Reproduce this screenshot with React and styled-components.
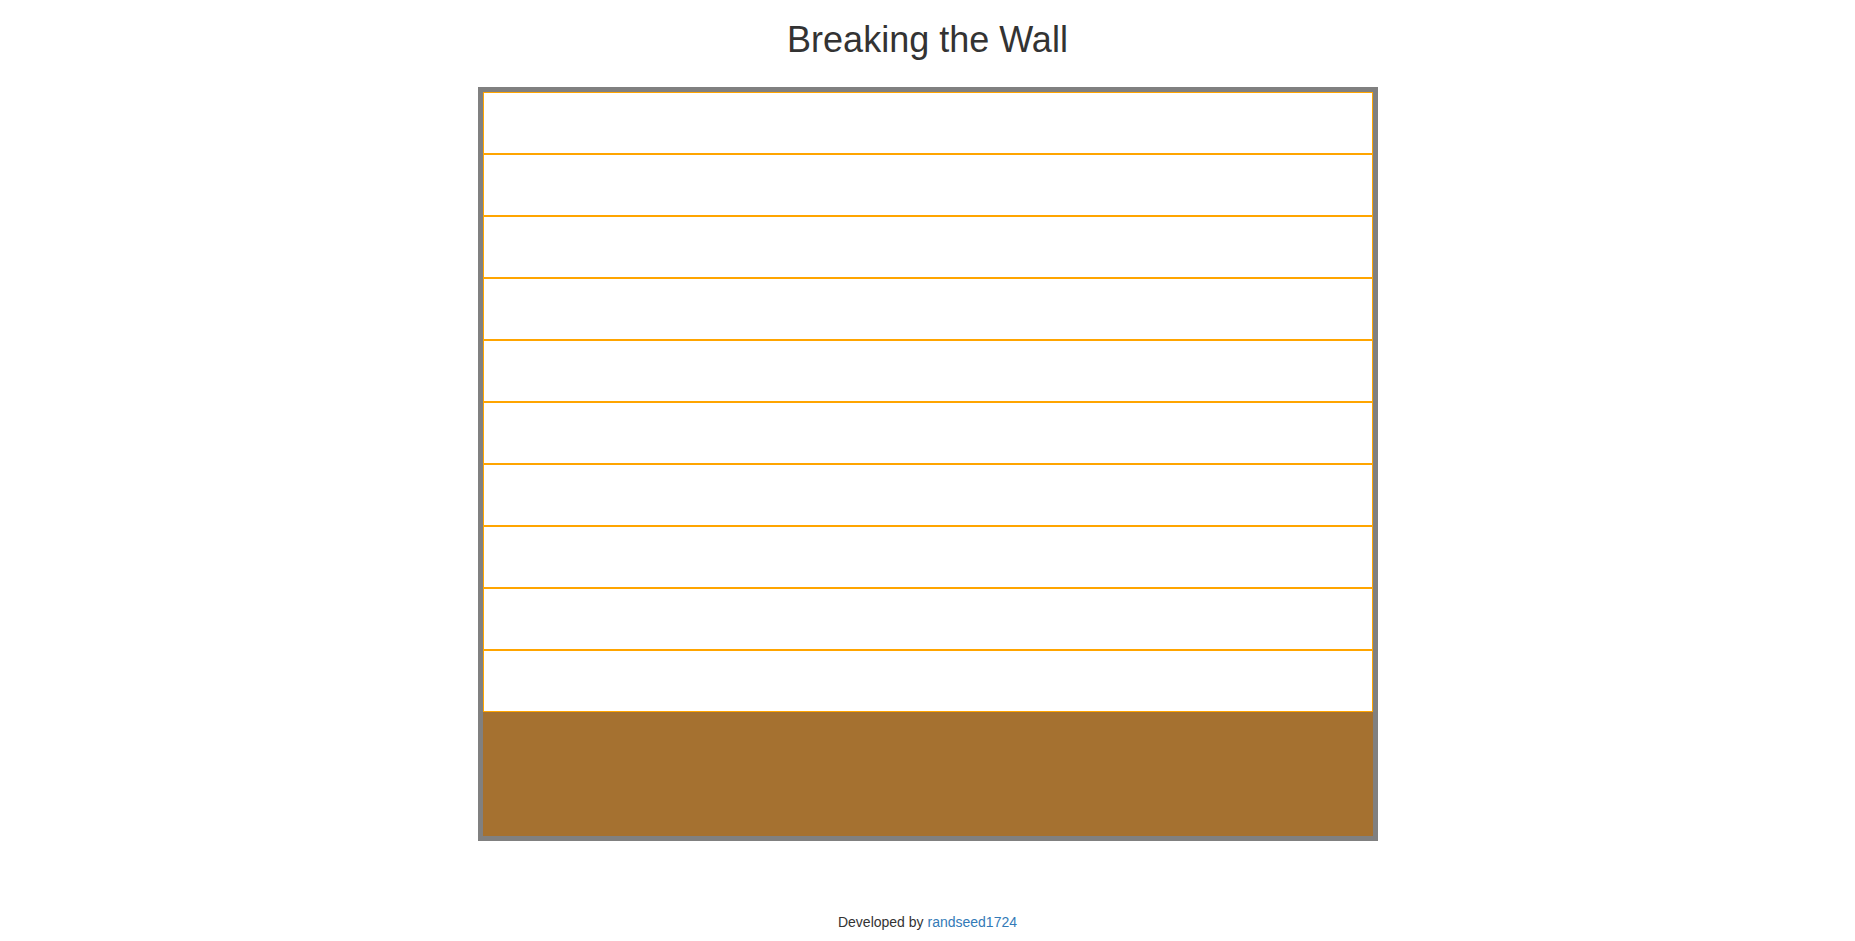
import React from 'react';
import styled, { createGlobalStyle } from 'styled-components';

const GlobalStyle = createGlobalStyle`
	body {
		margin: 0;
		background: #fff;
		font-family: "Liberation Sans", Arial, sans-serif;
		color: #333;
	}
`;

const Page = styled.div`
	display: flex;
	flex-direction: column;
	align-items: center;
	width: 100%;
`;
const Title = styled.h1`
	margin: 20px 0 0;
	font-size: 36px;
	font-weight: 500;
	line-height: 40px;
	color: #333;
`;
const Board = styled.div`
	box-sizing: border-box;
	margin-top: 27px;
	width: 900px;
	height: 754px;
	border: 5px solid #808080;
	display: flex;
	flex-direction: column;
`;
const Brick = styled.div`
	box-sizing: border-box;
	height: 62px;
	border: 1px solid #ffa500;
	background: ${(p) => (p.$broken ? 'transparent' : '#fff')};
`;
const Paddle = styled.div`
	flex: 1;
	background: #a57130;
`;
const Footer = styled.footer`
	margin-top: 71px;
	font-size: 14px;
	line-height: 20px;
	color: #333;
`;
const Link = styled.a`
	color: #337ab7;
	text-decoration: none;
`;

const rows = Array.from({ length: 10 }, (_, i) => i);

const App = () => (
	<Page>
		<GlobalStyle />
		<Title>Breaking the Wall</Title>
		<Board>
			{rows.map((r) => (
				<Brick key={r} />
			))}
			<Paddle />
		</Board>
		<Footer>
			Developed by <Link href="#">randseed1724</Link>
		</Footer>
	</Page>
);

export default App;
